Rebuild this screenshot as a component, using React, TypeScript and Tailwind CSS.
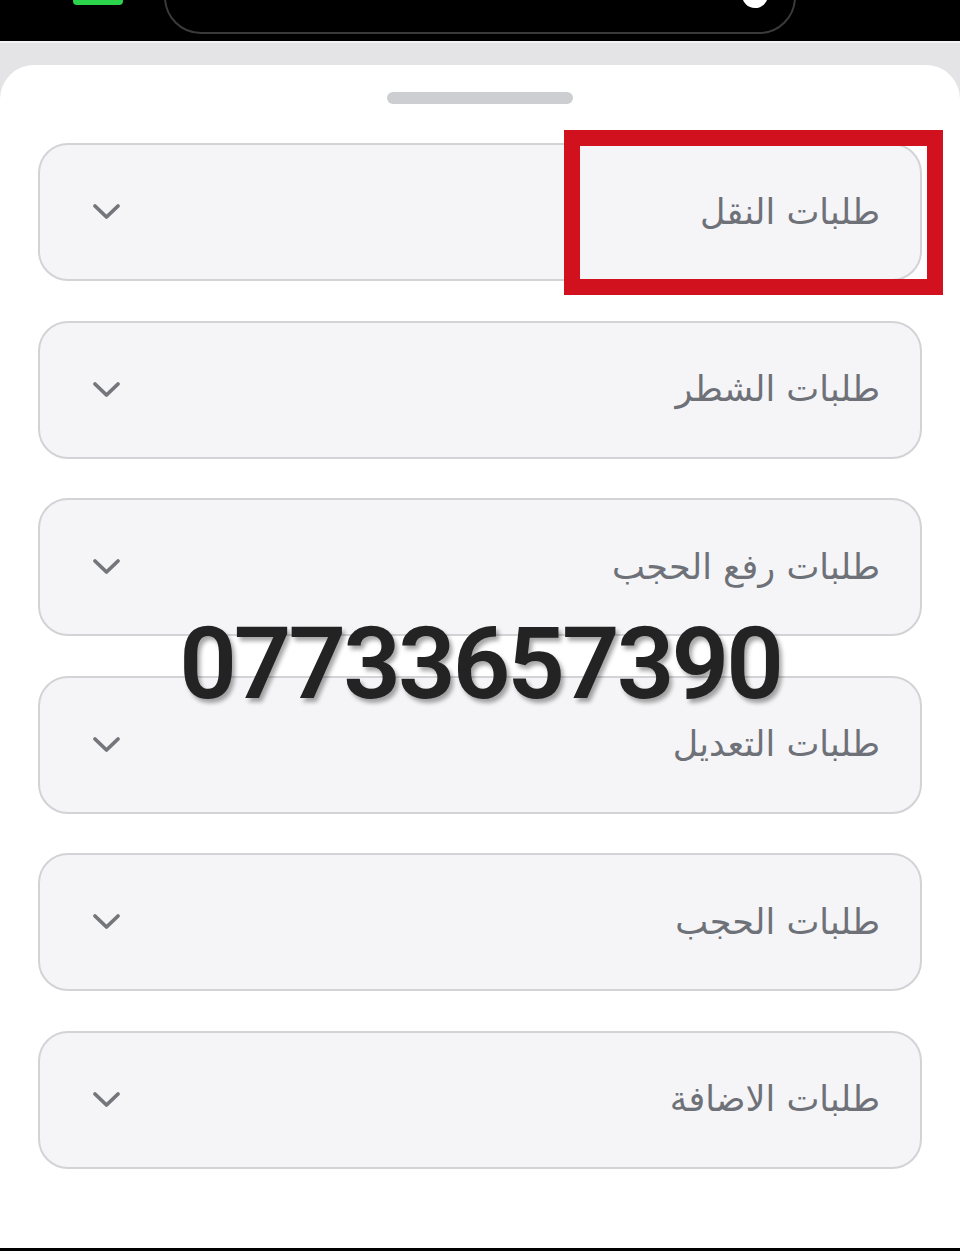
import React from "react";

const items = [
  "طلبات النقل",
  "طلبات الشطر",
  "طلبات رفع الحجب",
  "طلبات التعديل",
  "طلبات الحجب",
  "طلبات الاضافة",
];

function Chevron() {
  return (
    <svg width="30" height="18" viewBox="0 0 30 18" fill="none">
      <path d="M3 3 L14.5 14 L26 3" stroke="#74767c" strokeWidth="3.8" strokeLinecap="round" strokeLinejoin="round" />
    </svg>
  );
}

export default function App() {
  return (
    <div className="relative w-[960px] h-[1251px] bg-black flex flex-col overflow-hidden" style={{ fontFamily: '"DejaVu Sans", "Noto Sans", sans-serif' }}>
      {/* status / top bar */}
      <div className="relative h-[41px] bg-black shrink-0">
        <div className="absolute left-[73px] top-[-6px] w-[50px] h-[11px] rounded-[4px] bg-[#2bd44a]" />
        <div className="absolute left-[164px] top-[-40px] w-[632px] h-[74px] rounded-[40px] border-2 border-[#3a3a3c]" />
        <div className="absolute left-[742px] top-[-14px] w-[26px] h-[22px] rounded-b-full bg-white" />
      </div>
      <div className="h-[2px] bg-[#f2f2f4] shrink-0" />
      <div className="flex-1 bg-[#e4e4e6] pt-[22px] flex flex-col">
        <div className="flex-1 bg-white rounded-t-[34px] flex flex-col pt-[27px]">
          <div className="mx-auto w-[186px] h-[12px] rounded-full bg-[#cdced2]" />
          <div className="mt-[39px] px-[38px] flex flex-col gap-[39.5px]">
            {items.map((t) => (
              <div
                key={t}
                dir="rtl"
                className="h-[138px] rounded-[30px] border-2 border-[#d3d3d7] bg-[#f5f5f7] flex items-center justify-between pr-[40px] pl-[52px]"
              >
                <span className="text-[35px] text-[#6e7178] leading-none">{t}</span>
                <Chevron />
              </div>
            ))}
          </div>
        </div>
      </div>
      <div className="h-[3px] bg-black shrink-0" />

      {/* red highlight */}
      <div className="absolute left-[564px] top-[130px] w-[379px] h-[165px] border-[16px] border-[#d2111e]" />

      {/* watermark number */}
      <div
        className="absolute left-0 right-0 top-[613px] text-center text-[101px] font-semibold text-[#232323] leading-none tracking-[-3px]"
        style={{ fontFamily: 'Roboto, "Liberation Sans", sans-serif', textShadow: "3px 4px 4px rgba(0,0,0,0.35)" }}
      >
        07733657390
      </div>
    </div>
  );
}
